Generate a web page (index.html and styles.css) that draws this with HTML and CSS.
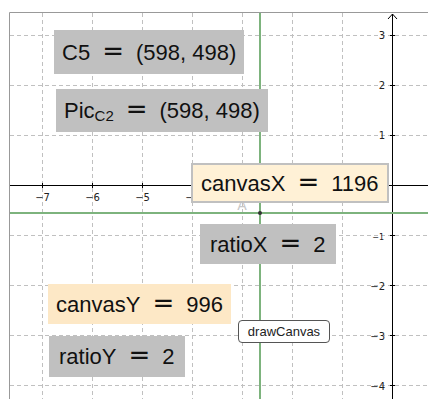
FILE: index.html
```html
<!DOCTYPE html>
<html lang="en">
  <head>
    <meta charset="UTF-8" />
    <title>drawCanvas</title>
    <link rel="stylesheet" href="styles.css">
  </head>
  <body>
    <div class="view">
      <svg class="graph" width="428" height="399" viewBox="0 0 428 399">
        <g class="grid">
          <line x1="42.5" y1="13" x2="42.5" y2="399" />
          <line x1="92.5" y1="13" x2="92.5" y2="399" />
          <line x1="142.5" y1="13" x2="142.5" y2="399" />
          <line x1="192.5" y1="13" x2="192.5" y2="399" />
          <line x1="242.5" y1="13" x2="242.5" y2="399" />
          <line x1="292.5" y1="13" x2="292.5" y2="399" />
          <line x1="342.5" y1="13" x2="342.5" y2="399" />
          <line x1="10" y1="35.5" x2="428" y2="35.5" />
          <line x1="10" y1="85.5" x2="428" y2="85.5" />
          <line x1="10" y1="135.5" x2="428" y2="135.5" />
          <line x1="10" y1="235.5" x2="428" y2="235.5" />
          <line x1="10" y1="285.5" x2="428" y2="285.5" />
          <line x1="10" y1="335.5" x2="428" y2="335.5" />
          <line x1="10" y1="385.5" x2="428" y2="385.5" />
        </g>
        <g class="axes">
          <line x1="10" y1="185.5" x2="428" y2="185.5" />
          <line x1="392.5" y1="14" x2="392.5" y2="399" />
          <polyline points="388,19 392.5,14 397,19" />
          <line x1="42.5" y1="183" x2="42.5" y2="188" />
          <line x1="92.5" y1="183" x2="92.5" y2="188" />
          <line x1="142.5" y1="183" x2="142.5" y2="188" />
          <line x1="390" y1="35.5" x2="395" y2="35.5" />
          <line x1="390" y1="85.5" x2="395" y2="85.5" />
          <line x1="390" y1="135.5" x2="395" y2="135.5" />
          <line x1="390" y1="235.5" x2="395" y2="235.5" />
          <line x1="390" y1="285.5" x2="395" y2="285.5" />
          <line x1="390" y1="335.5" x2="395" y2="335.5" />
          <line x1="390" y1="385.5" x2="395" y2="385.5" />
        </g>
        <g class="ticks">
          <text x="42.5" y="201" text-anchor="middle">−7</text>
          <text x="92.5" y="201" text-anchor="middle">−6</text>
          <text x="142.5" y="201" text-anchor="middle">−5</text>
          <text x="192.5" y="201" text-anchor="middle">−4</text>
          <text x="385" y="39" text-anchor="end">3</text>
          <text x="385" y="89" text-anchor="end">2</text>
          <text x="385" y="139" text-anchor="end">1</text>
          <text x="384" y="240" text-anchor="end" class="small">−1</text>
          <text x="385" y="290" text-anchor="end">−2</text>
          <text x="385" y="340" text-anchor="end">−3</text>
          <text x="385" y="390" text-anchor="end">−4</text>
        </g>
        <g class="green">
          <line x1="10" y1="213" x2="428" y2="213" />
          <line x1="260" y1="13" x2="260" y2="399" />
        </g>
        <text x="242" y="210" text-anchor="middle" class="point-label">A</text>
        <circle cx="260" cy="213" r="2" class="point" />
        <path class="frame" d="M9.5 399 V12.5 H428" />
      </svg>

      <div class="label grey c5">C5<span class="eq">=</span>(598, 498)</div>
      <div class="label grey pic">Pic<sub>C2</sub><span class="eq">=</span>(598, 498)</div>
      <div class="label cream canvas-x">canvasX<span class="eq">=</span>1196</div>
      <div class="label grey ratio-x">ratioX<span class="eq">=</span>2</div>
      <div class="label peach canvas-y">canvasY<span class="eq">=</span>996</div>
      <div class="label grey ratio-y">ratioY<span class="eq">=</span>2</div>
      <button class="btn">drawCanvas</button>
    </div>
  </body>
</html>
```

FILE: styles.css
```css
body {
  margin: 0;
  background: #fff;
  font-family: 'Liberation Sans', Arial, sans-serif;
}

.view {
  position: relative;
  width: 428px;
  height: 399px;
  overflow: hidden;
}

.graph {
  display: block;
}

.grid line {
  stroke: #c0c0c0;
  stroke-width: 1;
  stroke-dasharray: 4 3;
}

.axes line,
.axes polyline {
  stroke: #000;
  stroke-width: 1;
  fill: none;
}

.ticks text {
  font-family: 'DejaVu Sans', sans-serif;
  font-size: 10px;
  fill: #222;
}

.ticks .small {
  font-size: 8px;
}

.green line {
  stroke: #7db37d;
  stroke-width: 2;
}

.point {
  fill: #333;
}

.point-label {
  font-family: 'DejaVu Sans', sans-serif;
  font-size: 14px;
  fill: #c8c8c8;
}

.frame {
  stroke: #999;
  stroke-width: 1;
  fill: none;
}

.label {
  position: absolute;
  box-sizing: border-box;
  padding: 8px 8px;
  font-size: 22px;
  line-height: 26px;
  color: #111;
  white-space: nowrap;
}

.label sub {
  font-size: 15px;
  line-height: 0;
  vertical-align: -3px;
}

.eq {
  font-family: 'DejaVu Sans', sans-serif;
  font-size: 26px;
  margin: 0 12px;
}

.grey {
  background: #c0c0c0;
}

.cream {
  background: #fff1d6;
  border: 2px solid #c0c0c0;
  padding: 5px 8px;
  line-height: 25px;
}

.peach {
  background: #fde8c6;
  padding: 6px 8px;
}

.c5 {
  left: 54px;
  top: 30px;
}

.pic {
  left: 56px;
  top: 89px;
  padding-top: 7px;
  padding-bottom: 8px;
}

.canvas-x {
  left: 191px;
  top: 163px;
}

.ratio-x {
  left: 200px;
  top: 224px;
  padding: 6px 10px;
}

.canvas-y {
  left: 48px;
  top: 284px;
}

.ratio-y {
  left: 49px;
  top: 336px;
  padding: 6px 10px 7px;
}

.btn {
  position: absolute;
  left: 238px;
  top: 320px;
  width: 92px;
  height: 23px;
  padding: 0;
  border: 1.5px solid #555;
  border-radius: 4px;
  background: #fff;
  font-family: 'Liberation Sans', Arial, sans-serif;
  font-size: 13px;
  color: #222;
}
```
